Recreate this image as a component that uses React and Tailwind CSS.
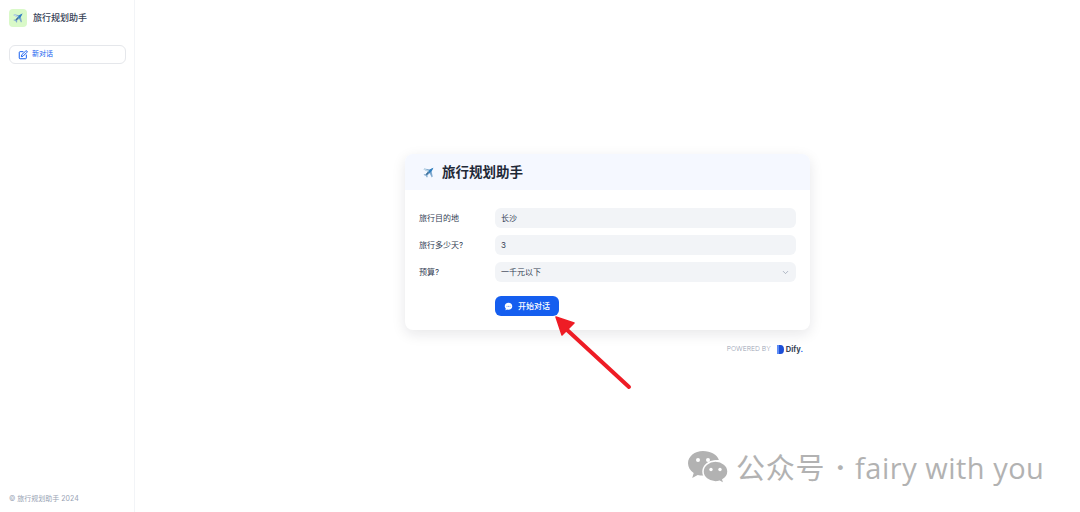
import React from 'react';
import { ChevronDown } from 'lucide-react';

const FONT = "font-['Inter','Noto_Sans_CJK_SC',sans-serif]";

// little paper plane, same drawing in sidebar and card
const PlaneIcon = ({ className }) => (
  <svg className={className} viewBox="0 0 16 16">
    <path d="M14 2 9.600 4.200 2.800 3 2 4.200 7.400 7 4.600 10.200 2.600 10 2 11 4.600 12 6 14.200 7 13.400 6.600 11.600 9.400 9 12 14 13.200 13 11.800 6.400z" fill="#7fa9cf" />
    <path d="M14 2 9.600 4.200 8 6.800 9.400 9 11.800 6.400z" fill="#2f7fbf" />
    <path d="M2 4.200 7.400 7 8.400 5.800 2.800 3z" fill="#c3dbe8" />
    <path d="M4.600 10.200 7.400 7 8.600 8.200 6 11z" fill="#3d6d94" />
  </svg>
);

const Field = ({ label, children }) => (
  <div className="flex items-center h-5">
    <div className="w-[76px] shrink-0 text-[8px] leading-none text-[#344054]">{label}</div>
    <div className="flex-1 h-5 px-[6px] flex items-center justify-between rounded-md bg-[#f2f4f7] text-[8px] text-[#344054]">
      {children}
    </div>
  </div>
);

export default function App() {
  return (
    <div className={`relative flex h-[512px] w-[1080px] overflow-hidden bg-white ${FONT}`}>
      {/* Sidebar */}
      <aside className="flex w-[135px] shrink-0 flex-col border-r border-[#f2f4f7] pl-[9px] pr-2">
        <div className="flex items-center gap-[6px] pt-[9px]">
          <div className="flex h-[18px] w-[18px] items-center justify-center rounded-[4px] bg-[#d9f9c8]">
            <PlaneIcon className="h-3 w-3" />
          </div>
          <span className="text-[9px] font-medium text-[#344054]">旅行规划助手</span>
        </div>
        <button className="mt-[18px] flex h-[19px] w-[117px] items-center gap-1 rounded-md border border-[#e5e7eb] bg-white pl-2 text-[7px] text-[#155eef]">
          <svg className="h-[10px] w-[10px]" viewBox="0 0 24 24" fill="none" stroke="currentColor" strokeWidth="2.400" strokeLinecap="round" strokeLinejoin="round">
            <path d="M12 4H5a2 2 0 0 0-2 2v13a2 2 0 0 0 2 2h13a2 2 0 0 0 2-2v-7" />
            <path d="M18.500 2.500a2.100 2.100 0 0 1 3 3L12 15l-4 1 1-4z" />
          </svg>
          新对话
        </button>
        <div className="mt-auto pb-2 text-[7px] text-[#98a2b3]">© 旅行规划助手 2024</div>
      </aside>

      {/* Main */}
      <main className="flex flex-1 flex-col items-center pt-[154px]">
        <div className="w-[405px] h-[176px] overflow-hidden rounded-lg bg-white shadow-[0_4px_14px_rgba(16,24,40,0.1)]">
          <div className="flex h-9 items-center gap-[7px] bg-[#f5f8ff] pl-[17px]">
            <PlaneIcon className="h-[13px] w-[13px]" />
            <h1 className="text-[13.500px] font-semibold text-[#1f2937]">旅行规划助手</h1>
          </div>
          <div className="flex flex-col gap-[7px] pl-[14px] pr-[14px] pt-[18px]">
            <Field label="旅行目的地">长沙</Field>
            <Field label="旅行多少天?">3</Field>
            <Field label="预算?">
              一千元以下
              <ChevronDown className="h-[9px] w-[9px] text-[#98a2b3]" />
            </Field>
            <div className="mt-[7px] pl-[76px]">
              <button className="flex h-5 w-16 items-center justify-center gap-[5px] rounded-md bg-[#155eef] text-[8px] font-medium text-white">
                <svg className="h-[9px] w-[9px]" viewBox="0 0 24 24" fill="currentColor">
                  <path d="M12 2C6.200 2 2 6 2 11.200c0 2.500 1 4.800 2.700 6.400L4 22l4.600-1.700c1 .3 2.200.5 3.400.5 5.800 0 10-4 10-9.600S17.800 2 12 2z" />
                  <circle cx="8" cy="11.500" r="1.300" fill="#155eef" />
                  <circle cx="12" cy="11.500" r="1.300" fill="#155eef" />
                  <circle cx="16" cy="11.500" r="1.300" fill="#155eef" />
                </svg>
                开始对话
              </button>
            </div>
          </div>
        </div>
        <div className="mt-[14px] flex h-[11px] w-[405px] items-center justify-end gap-[6px] pr-[7px]">
          <span className="text-[6.800px] font-light text-[#98a2b3]">POWERED BY</span>
          <span className="flex items-center gap-[2px] text-[7.500px] font-bold text-[#344054]">
            <svg className="h-[9px] w-[7px]" viewBox="0 0 7 9">
              <path d="M0 0h3.500a3.500 4.500 0 0 1 0 9H0z" fill="#1c4fd8" />
              <path d="M0 0h2v9H0z" fill="#5f8df5" />
            </svg>
            <span>Dify<span className="text-[#155eef]">.</span></span>
          </span>
        </div>
      </main>

      {/* Red annotation arrow */}
      <svg className="absolute left-[545px] top-[308px] h-[90px] w-[95px]" viewBox="0 0 95 90">
        <path d="M84 79 20 20" stroke="#ee1c25" strokeWidth="4" strokeLinecap="round" fill="none" />
        <path d="M11 9 29 15 17 27z" fill="#ee1c25" stroke="#ee1c25" strokeWidth="1.500" strokeLinejoin="round" />
      </svg>

      {/* Watermark */}
      <div className="absolute left-[687px] top-[450px] flex items-center gap-[7px] text-[#b2b2b2]">
        <svg className="h-[34px] w-[42px]" viewBox="0 0 42 34">
          <path d="M16 1C7.700 1 1 6.500 1 13.300c0 3.900 2.200 7.300 5.700 9.600L5.200 28l5.500-3.100c1.700.5 3.500.7 5.300.7 1 0 1-.1 1.800-.2-.4-1.200-.6-2.500-.6-3.800 0-6.500 6.200-11.700 13.700-11.700h1C30.200 4.800 23.700 1 16 1z" fill="currentColor" />
          <path d="M41 21.500c0-5.800-5.700-10.400-12.500-10.400S16 15.700 16 21.500s5.700 10.400 12.500 10.400c1.500 0 2.900-.2 4.200-.6l4.400 2.500-1.200-4.100c3-1.900 5.100-4.800 5.100-8.200z" fill="currentColor" stroke="#fff" strokeWidth="1.500" />
          <circle cx="11" cy="10" r="2" fill="#fff" />
          <circle cx="21" cy="10" r="2" fill="#fff" />
          <circle cx="24" cy="19.500" r="1.700" fill="#fff" />
          <circle cx="33" cy="19.500" r="1.700" fill="#fff" />
        </svg>
        <span className="font-['Open_Sans','Noto_Sans_CJK_SC',sans-serif] text-[29px] leading-none tracking-[0.8px] whitespace-nowrap">公众号</span>
        <span className="ml-[3px] text-[29px] font-bold leading-none">·</span>
        <span className="ml-[3px] font-['Open_Sans',sans-serif] text-[29px] leading-none tracking-[0.5px] whitespace-nowrap">fairy with you</span>
      </div>
    </div>
  );
}
